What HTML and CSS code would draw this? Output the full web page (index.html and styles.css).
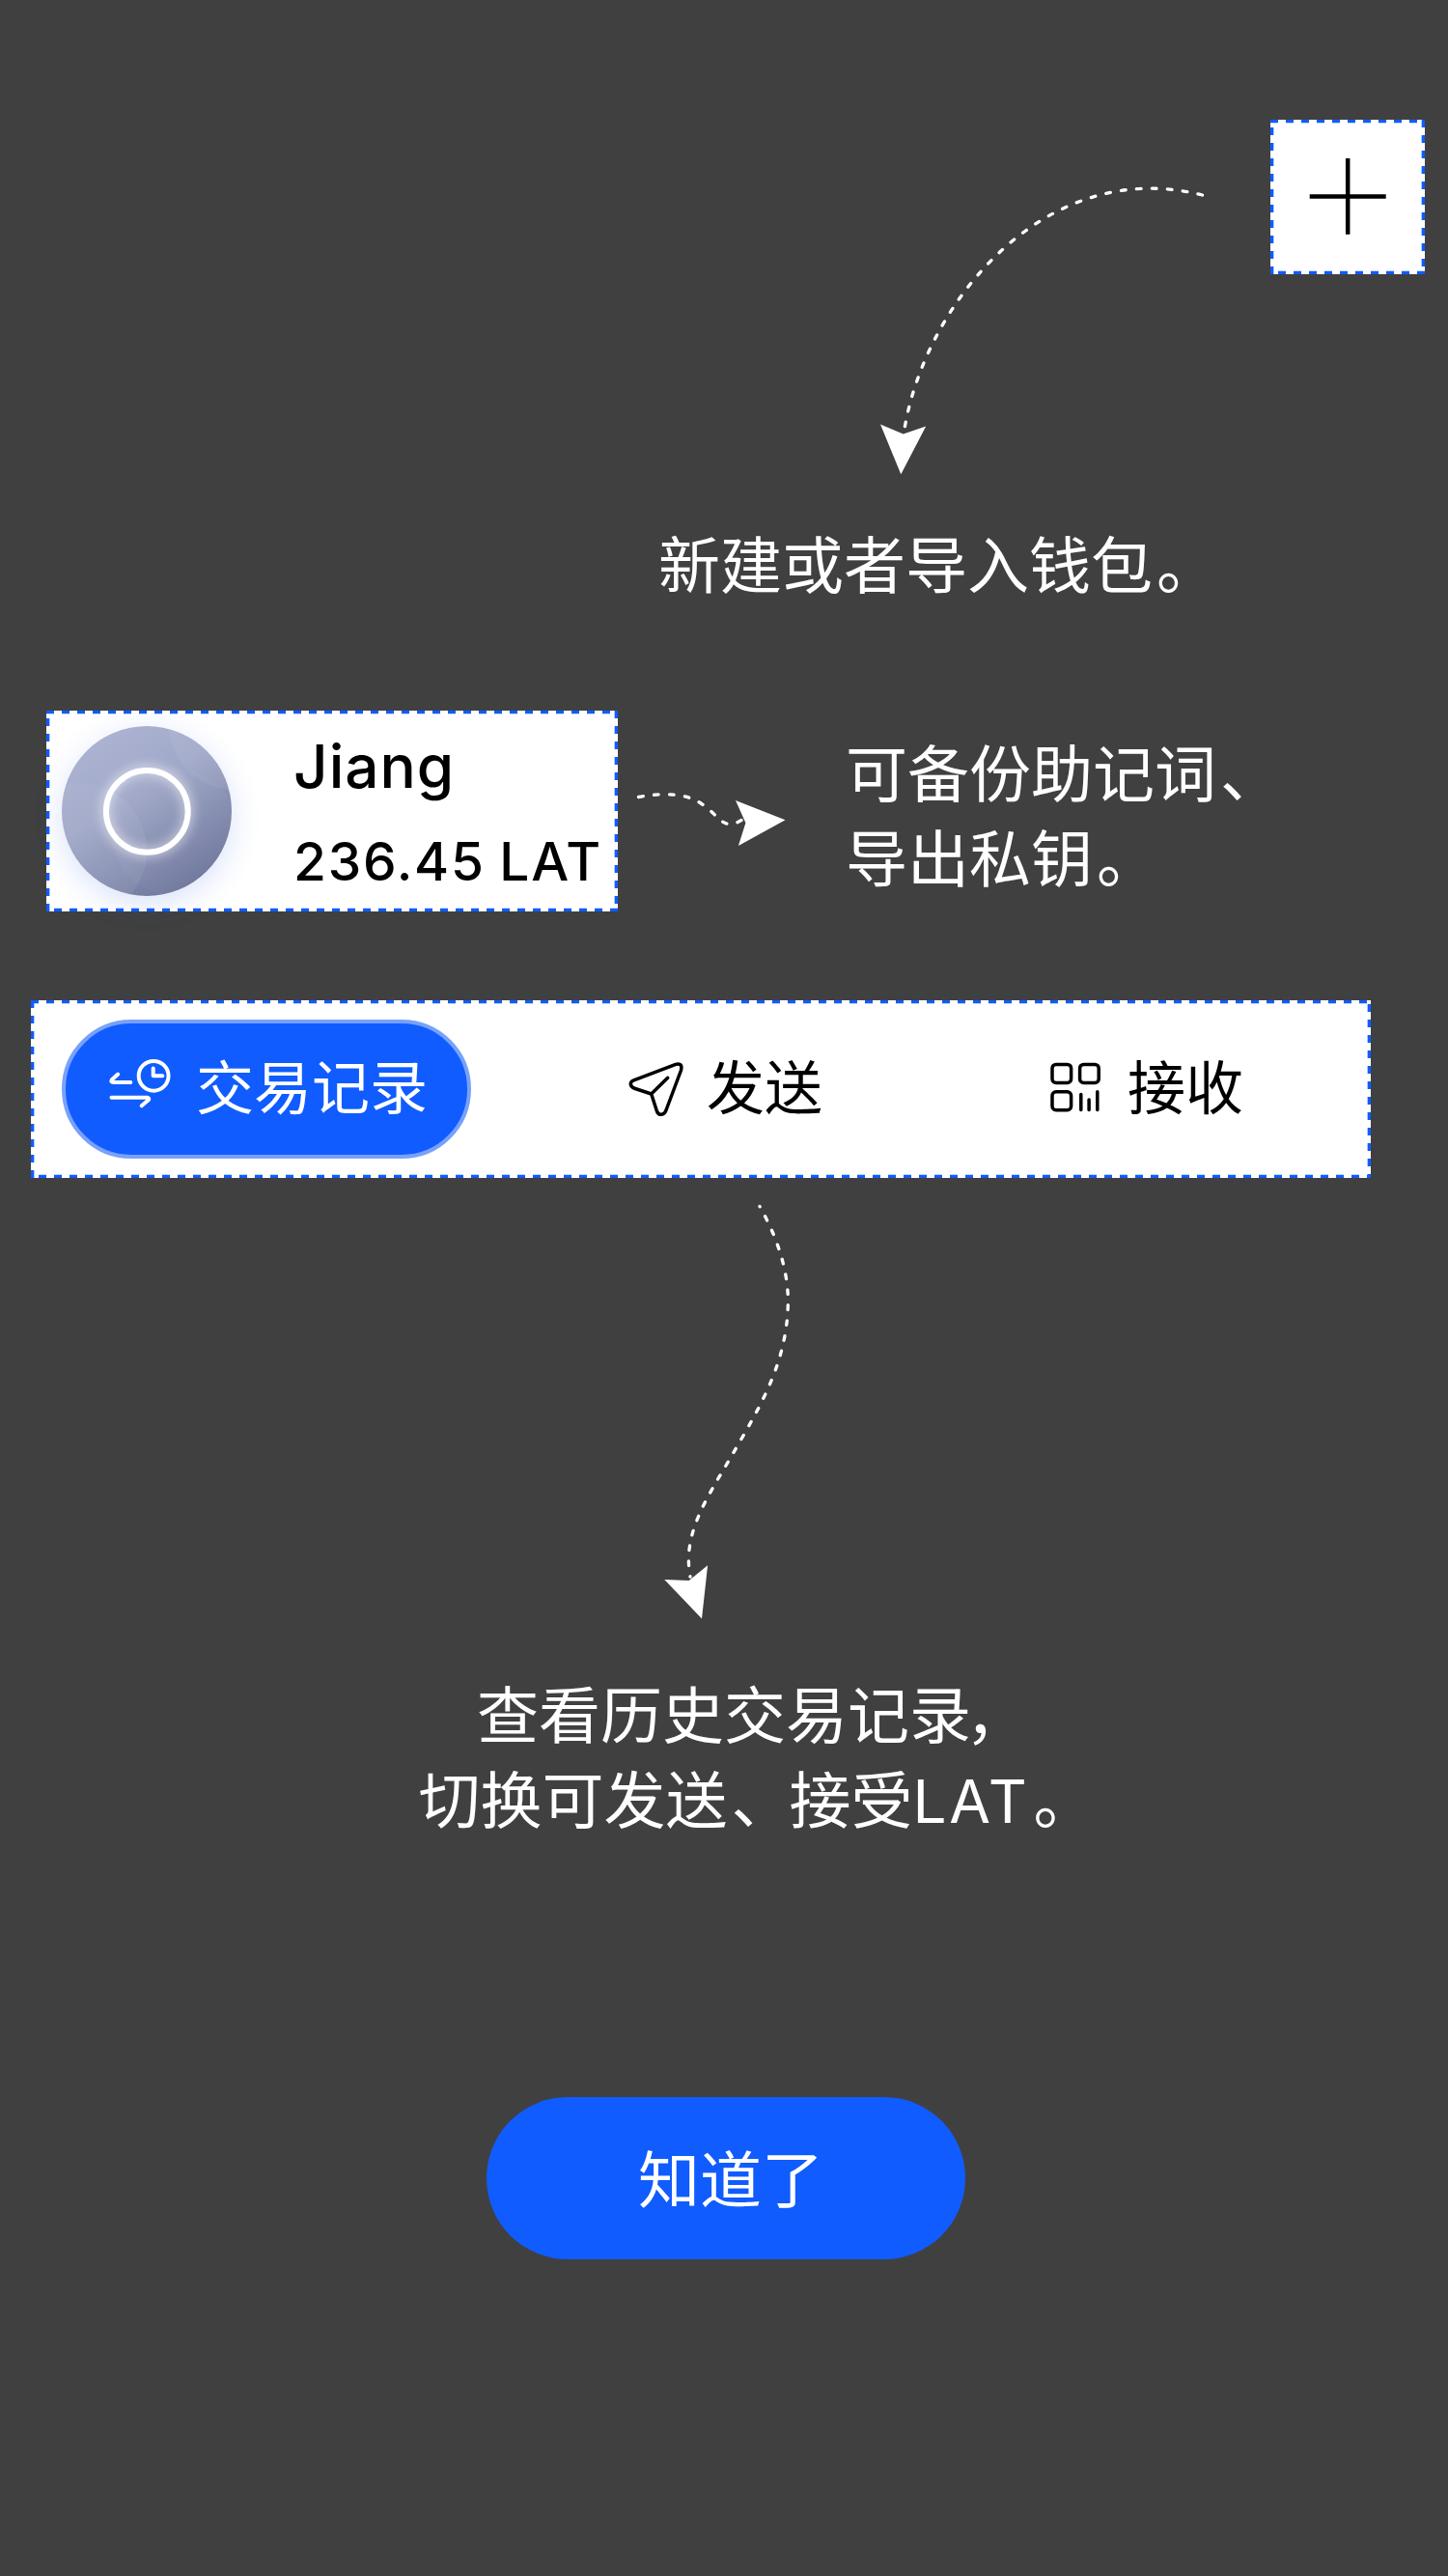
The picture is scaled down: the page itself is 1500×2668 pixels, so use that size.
FILE: index.html
```html
<!DOCTYPE html>
<html lang="zh-CN">
<head>
<meta charset="utf-8">
<title>新手引导</title>
<link rel="stylesheet" href="styles.css">
</head>
<body>
<main class="guide">
  <section class="step step-add">
    <div class="step-top">
      <svg class="arrow arrow-add" viewBox="890 170 380 340">
        <path class="trail" d="M1245.500 202C1084 161 958 312 936.500 447"/>
        <path class="head" d="M912 439.500L935.700 449.500L959.200 441.500L933.300 491.300Z"/>
      </svg>
      <div class="spot spot-add">
        <svg class="plus" viewBox="0 0 80 80"><path d="M40.200 0V78.800M0.700 39.400H79.700"/></svg>
        <svg class="outline"><rect width="100%" height="100%"/></svg>
      </div>
    </div>
    <p class="note note-add">新建或者导入钱包<span class="stop">。</span></p>
  </section>

  <section class="step step-wallet">
    <div class="spot spot-wallet">
      <svg class="avatar" viewBox="0 0 176 176">
        <defs>
          <linearGradient id="disc" x1="0.25" y1="0.1" x2="0.8" y2="0.95">
            <stop offset="0" stop-color="#abb2d1"/><stop offset="0.35" stop-color="#a0a8c8"/><stop offset="1" stop-color="#6b7399"/>
          </linearGradient>
          <linearGradient id="sheen" x1="0" y1="0" x2="1" y2="1">
            <stop offset="0" stop-color="#fff" stop-opacity="0.02"/><stop offset="1" stop-color="#fff" stop-opacity="0.08"/>
          </linearGradient>
          <linearGradient id="sheen-up" x1="1" y1="0" x2="0" y2="1">
            <stop offset="0" stop-color="#fff" stop-opacity="0.1"/><stop offset="1" stop-color="#fff" stop-opacity="0.05"/>
          </linearGradient>
          <clipPath id="round"><circle cx="88" cy="88" r="88"/></clipPath>
          <filter id="glow" x="-40%" y="-40%" width="180%" height="180%"><feGaussianBlur stdDeviation="6"/></filter>
        </defs>
        <circle cx="88" cy="88" r="88" fill="url(#disc)"/>
        <g clip-path="url(#round)">
          <circle cx="18" cy="129" r="70" fill="url(#sheen)"/>
          <circle cx="180" cy="-4" r="70" fill="url(#sheen-up)"/>
          <circle cx="117" cy="110" r="66" fill="#fff" fill-opacity="0.03"/>
        </g>
        <circle class="halo" cx="88.300" cy="88.300" r="42.500" filter="url(#glow)"/>
        <circle class="ring" cx="88.300" cy="88.300" r="42.400"/>
      </svg>
      <div class="wallet-text">
        <div class="wallet-name">Jiang</div>
        <div class="wallet-sum">236.45 LAT</div>
      </div>
      <svg class="outline"><rect width="100%" height="100%"/></svg>
    </div>
    <svg class="arrow arrow-wallet" viewBox="650 810 170 80">
      <path class="trail" d="M661.500 825.500C689 820.500 711 822 726 832C742 842.500 746 853.500 756 853.500C762 853.500 766 850.500 771 848"/>
      <path class="head" d="M762 829L813.500 849.300L764.900 876L772.400 852.300Z"/>
    </svg>
    <p class="note note-wallet">可备份助记词<span class="pause">、</span><br>导出私钥<span class="stop">。</span></p>
  </section>

  <section class="step step-tabs">
    <div class="spot spot-tabs">
      <div class="tab tab-active">
        <svg class="icon icon-history" viewBox="108 1092 72 60">
          <circle cx="158.100" cy="1114.300" r="15.400"/>
          <path d="M157.700 1106.500V1114.300H167.300M121.200 1112.500L114.700 1118.500Q113.500 1121 116.500 1121H134.300M114.500 1136.700H151.500Q154.500 1137.500 152.500 1139.500L145.700 1145.300"/>
        </svg>
        <span>交易记录</span>
      </div>
      <div class="tab tab-send">
        <svg class="icon icon-send" viewBox="0 0 60 60">
          <path d="M6.500 20.800L50 4.400Q57.500 2.500 55.500 10.500L40.500 50.500C38.500 57.500 32.500 58 30.500 53L24.700 35L8 29.500C2 27.500 2 22.500 6.500 20.800ZM24.700 35L41.700 18.300"/>
        </svg>
        <span>发送</span>
      </div>
      <div class="tab tab-receive">
        <svg class="icon icon-code" viewBox="1084 1096 60 60">
          <rect x="1090" y="1102.400" width="19.600" height="19" rx="4"/>
          <rect x="1118.600" y="1102.400" width="19.600" height="19" rx="4"/>
          <rect x="1090" y="1130.700" width="19.600" height="19" rx="4"/>
          <path d="M1119.800 1133.500V1149.600M1128.100 1139V1149.600M1136.800 1130.700V1149.600"/>
        </svg>
        <span>接收</span>
      </div>
      <svg class="outline"><rect width="100%" height="100%"/></svg>
    </div>
    <svg class="arrow arrow-tabs" viewBox="660 1236 200 450">
      <path class="trail trail-offset" d="M787 1249.500C810 1290 817 1325 816.300 1351C815 1415 784 1462 756.700 1510C730 1555 707 1590 715 1633"/>
      <path class="head" d="M688.300 1636L713.700 1637L733.100 1621.300L727 1676.500Z"/>
    </svg>
    <p class="note note-tabs">查看历史交易记录<span class="comma">，</span><br>切换可发送<span class="pause">、</span>接受<span class="latin">LAT</span><span class="stop">。</span></p>
  </section>

  <button class="confirm" type="button">知道了</button>
</main>
</body>
</html>
```
FILE: styles.css
```css
* { box-sizing: border-box; }

body {
  margin: 0;
  background: #404040;
  font-family: "Inter", "Noto Sans CJK SC", sans-serif;
}

.guide {
  display: flex;
  flex-direction: column;
  width: 1500px;
  height: 2668px;
  padding-top: 124px;
}

.note {
  margin: 0;
  color: #fff;
  font-family: "Noto Sans CJK SC", sans-serif;
  font-size: 64px;
  font-weight: 400;
  line-height: 88px;
  white-space: nowrap;
}

.stop, .pause { position: relative; left: 4px; }
.comma { position: relative; left: -6px; }

.latin {
  font-family: "Inter", sans-serif;
  font-size: 62px;
  font-weight: 400;
  line-height: 1;
  letter-spacing: 2.800px;
}

/* Highlighted areas */
.spot {
  position: relative;
  flex: none;
  background: #fff;
  color: #000;
}

.outline {
  position: absolute;
  inset: 0;
  width: 100%;
  height: 100%;
}

.outline rect {
  fill: none;
  stroke: #105cfe;
  stroke-width: 6.660;
  stroke-dasharray: 8 8;
}

/* Dashed arrows */
.arrow { flex: none; display: block; }

.trail {
  fill: none;
  stroke: #fff;
  stroke-width: 3.330;
  stroke-linecap: round;
  stroke-dasharray: 4.670 11.330;
}

.trail-offset { stroke-dashoffset: 4.400; }

.head { fill: #fff; }

/* Add wallet */
.step-top {
  display: flex;
  justify-content: flex-end;
  gap: 46px;
  height: 413px;
  padding-right: 24px;
}

.arrow-add { width: 380px; height: 340px; margin-top: 46px; }

.spot-add {
  display: grid;
  place-items: center;
  width: 160px;
  height: 160px;
}

.plus { width: 80px; height: 80px; }

.plus path { stroke: #000; stroke-width: 4.500; }

.note-add { margin-left: 682px; }

/* Wallet card */
.step-wallet {
  display: flex;
  height: 208px;
  margin-top: 111px;
  padding-left: 48px;
}

.spot-wallet {
  display: flex;
  width: 592px;
  height: 208px;
  padding: 16px;
}

.avatar {
  flex: none;
  width: 176px;
  height: 176px;
  border-radius: 50%;
  box-shadow: 0 8px 30px rgba(30, 85, 230, 0.17);
  overflow: visible;
}

.halo { fill: none; stroke: #fff; stroke-width: 9; opacity: 0.6; }
.ring { fill: none; stroke: #fff; stroke-width: 6; }

.wallet-text {
  display: flex;
  flex-direction: column;
  margin-left: 64px;
  font-weight: 500;
  white-space: nowrap;
}

.wallet-name { font-size: 62px; line-height: 84px; letter-spacing: 1px; }
.wallet-sum {
  margin-top: 14px;
  font-size: 55px;
  line-height: 84px;
  letter-spacing: 1.800px;
  word-spacing: -2px;
}

.arrow-wallet { width: 170px; height: 80px; margin: 74px 0 0 10px; }

.note-wallet { margin: 17px 0 0 56px; }

/* Action bar */
.step-tabs { margin-top: 92px; }

.spot-tabs {
  display: flex;
  align-items: center;
  width: 1388px;
  height: 184px;
  margin-left: 32px;
  padding: 0 32px;
}

.tab {
  display: flex;
  align-items: center;
  height: 144px;
  font-family: "Noto Sans CJK SC", sans-serif;
  font-size: 60px;
  font-weight: 400;
  line-height: 84px;
  white-space: nowrap;
}

.tab span { padding-bottom: 10px; }

.tab-active {
  width: 424px;
  padding-left: 41px;
  border: 4px solid #78a1fb;
  border-radius: 72px;
  background: #105cfe;
  color: #fff;
}

.tab-active span { margin-left: 22px; }
.tab-send { margin-left: 162px; }
.tab-send span { margin-left: 22px; }
.tab-receive { margin-left: 232px; }
.tab-receive span { margin-left: 24px; }

.icon {
  flex: none;
  width: 60px;
  height: 60px;
  fill: none;
  stroke: currentColor;
  stroke-width: 3.500;
  stroke-linecap: round;
  stroke-linejoin: round;
}

.icon-history { width: 72px; stroke-width: 4; margin-bottom: 13px; }
.icon-code { margin-bottom: 4px; }

.arrow-tabs { width: 200px; height: 450px; margin: 16px 0 0 660px; }

.note-tabs {
  width: 700px;
  margin: 42px 0 0 432px;
  text-align: center;
}

.confirm {
  width: 496px;
  height: 168px;
  margin: 268px 0 0 504px;
  padding: 0 0 7px 10px;
  border: 0;
  border-radius: 84px;
  background: #105cfe;
  color: #fff;
  font-family: "Noto Sans CJK SC", sans-serif;
  font-size: 64px;
  font-weight: 400;
}
```
